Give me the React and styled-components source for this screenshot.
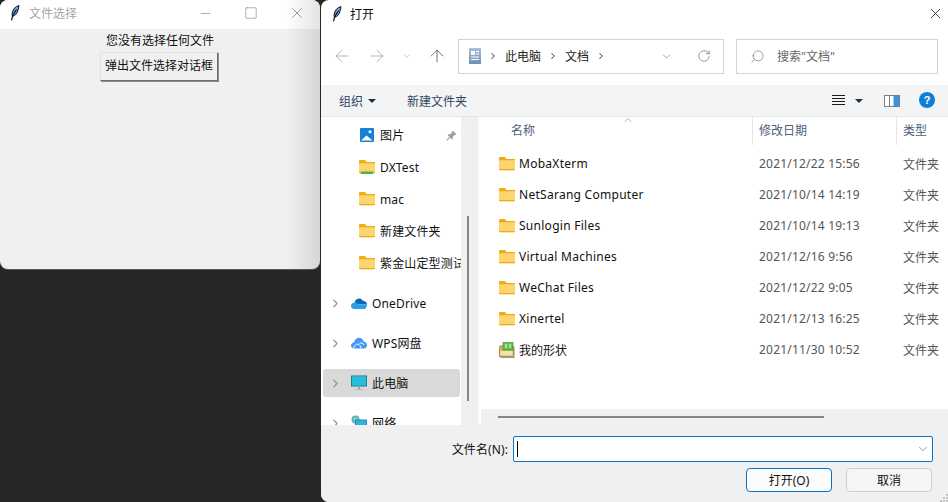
import React from 'react';
import styled, { createGlobalStyle } from 'styled-components';
import { ArrowLeft, ArrowRight, ArrowUp, ChevronDown, ChevronRight, RotateCw, Search, X, Minus, Square, ChevronUp } from 'lucide-react';

const sideTop = [
  { name: '图片', icon: 'picture', pin: true },
  { name: 'DXTest', icon: 'sync' },
  { name: 'mac', icon: 'folder' },
  { name: '新建文件夹', icon: 'folder' },
  { name: '紫金山定型测试', icon: 'folder' },
];

const sideTree = [
  { name: 'OneDrive', icon: 'onedrive' },
  { name: 'WPS网盘', icon: 'wps' },
  { name: '此电脑', icon: 'pc', active: true },
  { name: '网络', icon: 'network' },
];

const files = [
  { name: 'MobaXterm', date: '2021/12/22 15:56', type: '文件夹' },
  { name: 'NetSarang Computer', date: '2021/10/14 14:19', type: '文件夹' },
  { name: 'Sunlogin Files', date: '2021/10/14 19:13', type: '文件夹' },
  { name: 'Virtual Machines', date: '2021/12/16 9:56', type: '文件夹' },
  { name: 'WeChat Files', date: '2021/12/22 9:05', type: '文件夹' },
  { name: 'Xinertel', date: '2021/12/13 16:25', type: '文件夹' },
  { name: '我的形状', date: '2021/11/30 10:52', type: '文件夹', icon: 'shapes' },
];

const Feather = () => (
  <svg width="10" height="16" viewBox="0 0 10 16">
    <path d="M9 .6C5.500 1.400 2.800 4.200 2.200 8c-.2 1.400-.1 2.500.2 3.400 2.800-.6 4.700-3 5.500-5.800C8.400 3.900 8.800 2.200 9 .6z" fill="#6f9fe0" stroke="#0d1420" strokeWidth="1" />
    <path d="M6.500 4.500 2.600 11 1.500 15.400" fill="none" stroke="#0d1420" strokeWidth="1.200" />
  </svg>
);

const Folder = ({ sync }) => (
  <svg width="16" height="16" viewBox="0 0 16 16">
    <path d="M0 2.200C0 1.500.5 1 1.200 1h4.200c.4 0 .7.2 1 .5L7.600 3H16v2H0z" fill="#f0ac0e" />
    <path d="M0 4.300h15c.6 0 1 .4 1 1V13c0 .8-.5 1.300-1.200 1.300H1.200C.5 14.300 0 13.800 0 13z" fill="#fdd56f" />
    <path d="M0 13h16v.3c0 .6-.5 1-1.200 1H1.200C.5 14.300 0 13.900 0 13.300z" fill="#efac16" />
    {sync && <rect x="2" y="12.500" width="12" height="2.500" fill="#4cb848" />}
  </svg>
);

const PictureIcon = () => (
  <svg width="14" height="14" viewBox="0 0 14 14">
    <rect width="14" height="14" rx="1" fill="#1580d8" />
    <path d="M1 12.500 6.500 7.500 12.500 12.500z" fill="#fff" />
    <circle cx="10" cy="3.800" r="1.500" fill="#fff" />
  </svg>
);

const OneDriveIcon = () => (
  <svg width="16" height="11" viewBox="0 0 16 11">
    <path d="M3.600 4.500C4.200 2 6 .5 8 .5c1.700 0 3 .9 3.700 2.300 2.300 0 4 1.300 4.300 3.500H6z" fill="#0f64b8" />
    <path d="M3.500 11C1.500 11 0 9.700 0 7.900 0 6 1.600 4.500 3.700 4.500c1.400 0 2.500.6 3.300 1.800l9 0c.2 1.800-.9 4.700-2.800 4.700z" fill="#2b9fe8" />
  </svg>
);

const WpsIcon = () => (
  <svg width="16" height="12" viewBox="0 0 16 12">
    <path d="M3.500 11.500C1.500 11.500 0 10.200 0 8.400 0 6.700 1.300 5.500 3 5.400 3.600 2.600 5.700 .8 8 .8c2.200 0 4 1.500 4.600 3.800 2 .2 3.400 1.700 3.400 3.600 0 2-1.400 3.300-3.400 3.300z" fill="#3f9bf2" />
    <path d="M2.500 11.500C3.500 8 5 6.800 7 7.200c1.600.3 2.700 1.900 3 4.300" fill="none" stroke="#fff" strokeWidth="1" />
    <path d="M8.500 6.500C9.800 5.500 12 5.800 13 8" fill="none" stroke="#fff" strokeWidth="1" />
  </svg>
);

const PcIcon = () => (
  <svg width="16" height="16" viewBox="0 0 16 16">
    <rect y=".5" width="16" height="11" rx=".5" fill="#1f6f8b" />
    <rect x=".8" y="1.200" width="14.400" height="9.500" fill="#27bedc" />
    <rect x="7" y="11.500" width="2" height="2.500" fill="#9aa4aa" />
    <rect x="4" y="14" width="8" height="1" fill="#b4bcc0" />
  </svg>
);

const NetworkIcon = () => (
  <svg width="16" height="16" viewBox="0 0 16 16">
    <circle cx="4.500" cy="4.500" r="4" fill="#5ab0d8" />
    <path d="M2 3.500 5 1.800 6.500 4 4 7z" fill="#9ed27c" />
    <rect x="4" y="4.500" width="12" height="9" rx=".5" fill="#1f8fb2" />
    <rect x="5" y="5.500" width="10" height="7" fill="#31b5d4" />
  </svg>
);

const ShapesIcon = () => (
  <svg width="16" height="16" viewBox="0 0 16 16">
    <rect x="0" y="4" width="15" height="11" rx="1.500" fill="#d9b25f" stroke="#7a6a44" strokeWidth=".8" />
    <rect x="1.500" y="9" width="12" height="4.500" fill="#f2e3b0" />
    <rect x="4" y=".5" width="10" height="7.500" fill="#5cc04a" stroke="#3b8a2f" strokeWidth=".6" />
    <path d="M6 3h2.200M6 5h2.200M10 3h2.200M10 5h2.200" stroke="#fff" strokeWidth="1" />
    <rect x="2" y="15" width="14" height="1" fill="#9a9a9a" />
  </svg>
);

const DocsIcon = () => (
  <svg width="12" height="16" viewBox="0 0 12 16">
    <defs>
      <linearGradient id="docs" x1="0" y1="0" x2="0" y2="1">
        <stop offset="0" stopColor="#a9c0d9" />
        <stop offset="1" stopColor="#6e8fb5" />
      </linearGradient>
    </defs>
    <rect width="12" height="16" fill="url(#docs)" />
    <rect x="2" y="3" width="4" height="4" fill="#fff" />
    <path d="M7 3.500h3M7 6h3M2 9h8M2 11.500h8" stroke="#fff" strokeWidth="1" />
  </svg>
);

const PinIcon = () => (
  <svg width="11" height="11" viewBox="0 0 11 11">
    <path d="M6.800.5 10.500 4.200 9.500 5 8.800 4.700 6.800 6.700 6.800 8.800 6 9.500 1.500 5 2.200 4.200 4.300 4.200 6.300 2.200 6 1.500z" fill="#98a0a8" />
    <path d="M3.500 7.500.7 10.300" stroke="#98a0a8" strokeWidth="1.100" />
  </svg>
);

const PaneIcon = () => (
  <svg width="16" height="12" viewBox="0 0 16 12">
    <rect x=".5" y=".5" width="15" height="11" fill="#fff" stroke="#7e7e7e" />
    <rect x="5" y="1" width="1" height="10" fill="#7e7e7e" />
    <rect x="9.500" y="1" width="5.500" height="10" fill="#3b94e0" />
  </svg>
);

const ViewIcon = () => (
  <svg width="13" height="11" viewBox="0 0 13 11">
    <path d="M0 .5h13M0 3.500h13M0 6.500h13M0 9.500h13" stroke="#1a1a1a" strokeWidth="1" />
  </svg>
);

const GripIcon = () => (
  <svg width="8" height="8" viewBox="0 0 8 8">
    <path d="M6 0h2v2H6zM3 3h2v2H3zM6 3h2v2H6zM0 6h2v2H0zM3 6h2v2H3zM6 6h2v2H6z" fill="#c4c4c4" />
  </svg>
);

const iconFor = {
  picture: <PictureIcon />,
  sync: <Folder sync />,
  folder: <Folder />,
  onedrive: <OneDriveIcon />,
  wps: <WpsIcon />,
  pc: <PcIcon />,
  network: <NetworkIcon />,
  shapes: <ShapesIcon />,
};

export default function App() {
  return (
    <Desktop>
      <GlobalStyle />
      <TkWindow>
        <TkTitleBar>
          <Feather />
          <TkTitle>文件选择</TkTitle>
          <TkControls>
            <Minus size={15} strokeWidth={1} />
            <Square size={14} strokeWidth={1} />
            <X size={18} strokeWidth={1} />
          </TkControls>
        </TkTitleBar>
        <TkBody>
          <TkLabel>您没有选择任何文件</TkLabel>
          <TkButton>弹出文件选择对话框</TkButton>
        </TkBody>
      </TkWindow>

      <Dialog>
        <DialogTitleBar>
          <Feather />
          <DialogTitle>打开</DialogTitle>
          <CloseIcon><X size={17} strokeWidth={1.100} /></CloseIcon>
        </DialogTitleBar>

        <NavBar>
          <NavIcon $width={35} $faded><ArrowLeft size={20} strokeWidth={1} /></NavIcon>
          <NavIcon $width={35} $faded><ArrowRight size={20} strokeWidth={1} /></NavIcon>
          <NavIcon $width={25} $faded><ChevronDown size={10} strokeWidth={1.500} /></NavIcon>
          <NavIcon $width={31}><ArrowUp size={20} strokeWidth={1} /></NavIcon>
          <AddressBox>
            <DocsIcon />
            <Crumb><ChevronRight size={10} strokeWidth={2.500} />此电脑</Crumb>
            <Crumb><ChevronRight size={10} strokeWidth={2.500} />文档</Crumb>
            <ChevronRight size={10} strokeWidth={2.500} color="#555" />
            <AddressTools>
              <ChevronDown size={13} strokeWidth={1} color="#555" />
              <RotateCw size={14} strokeWidth={1} color="#555" />
            </AddressTools>
          </AddressBox>
          <SearchBox>
            <SearchGlyph><Search size={15} strokeWidth={1} color="#666" /></SearchGlyph>
            搜索"文档"
          </SearchBox>
        </NavBar>

        <CommandBar>
          <CommandItem>组织<Caret /></CommandItem>
          <CommandItem>新建文件夹</CommandItem>
          <CommandTools>
            <ViewIcon />
            <Caret />
            <PaneIcon />
            <HelpBadge>?</HelpBadge>
          </CommandTools>
        </CommandBar>

        <Body>
          <Sidebar>
            {sideTop.map(item => (
              <QuickRow key={item.name}>
                <RowIcon>{iconFor[item.icon]}</RowIcon>
                <RowName>{item.name}</RowName>
                {item.pin && <PinSlot><PinIcon /></PinSlot>}
              </QuickRow>
            ))}
            <TreeList>
              {sideTree.map(item => (
                <TreeRow key={item.name} $active={item.active}>
                  <ChevronRight size={13} strokeWidth={2.200} color="#939393" />
                  <RowIcon>{iconFor[item.icon]}</RowIcon>
                  <RowName>{item.name}</RowName>
                </TreeRow>
              ))}
            </TreeList>
          </Sidebar>
          <SideTrack><SideThumb /></SideTrack>
          <FilePane>
            <ListHeader>
              <SortArrow><ChevronUp size={12} strokeWidth={1} /></SortArrow>
              <HeaderCell $width={273} $pad={32}>名称</HeaderCell>
              <HeaderCell $width={144} $pad={6} $line>修改日期</HeaderCell>
              <HeaderCell $pad={6} $line>类型</HeaderCell>
            </ListHeader>
            <FileRows>
              {files.map(file => (
                <FileRow key={file.name}>
                  <FileName $latin={!file.icon}>
                    {iconFor[file.icon || 'folder']}
                    {file.name}
                  </FileName>
                  <FileMeta $width={144} $latin>{file.date}</FileMeta>
                  <FileMeta>{file.type}</FileMeta>
                </FileRow>
              ))}
            </FileRows>
            <HTrack><HThumb /></HTrack>
          </FilePane>
        </Body>

        <Footer>
          <NameRow>
            <NameLabel>文件名(N):</NameLabel>
            <NameInput>
              <Cursor />
              <ChevronDown size={14} strokeWidth={1} color="#555" />
            </NameInput>
          </NameRow>
          <ButtonRow>
            <DialogButton $primary>打开(O)</DialogButton>
            <DialogButton>取消</DialogButton>
          </ButtonRow>
          <Grip><GripIcon /></Grip>
        </Footer>
      </Dialog>
    </Desktop>
  );
}

const GlobalStyle = createGlobalStyle`
  html, body { margin: 0; padding: 0; background: #262626; }
  * { box-sizing: border-box; }
`;

const Desktop = styled.div`
  position: relative;
  width: 948px;
  height: 502px;
  overflow: hidden;
  background: #262626;
  font-family: "Noto Sans", "Noto Sans CJK SC", sans-serif;
  font-size: 12px;
  color: #111;
`;

const TkWindow = styled.div`
  position: absolute;
  left: 0;
  top: 0;
  width: 320px;
  height: 269px;
  border-radius: 8px;
  overflow: hidden;
  background: #f0f0f0;
  box-shadow: 0 1px 0 #555;
  display: flex;
  flex-direction: column;
  &::after {
    content: '';
    position: absolute;
    top: 0;
    right: 0;
    bottom: 0;
    width: 34px;
    background: linear-gradient(to right, rgba(0, 0, 0, 0), rgba(0, 0, 0, 0.11));
    pointer-events: none;
  }
`;

const TkTitleBar = styled.div`
  height: 29px;
  background: #fff;
  display: flex;
  align-items: center;
  padding: 0 0 3px 10px;
  flex-shrink: 0;
`;

const TkTitle = styled.span`
  margin-left: 9px;
  color: #a6a6a6;
`;

const TkControls = styled.div`
  margin-left: auto;
  width: 122px;
  padding-right: 14px;
  display: flex;
  justify-content: space-between;
  align-items: center;
  color: #7c7c7c;
`;

const TkBody = styled.div`
  display: flex;
  flex-direction: column;
  align-items: center;
  padding-top: 1px;
`;

const TkLabel = styled.div`
  height: 22px;
  line-height: 21px;
  color: #111;
`;

const TkButton = styled.div`
  width: 118px;
  height: 29px;
  margin-right: 2px;
  line-height: 26px;
  text-align: center;
  background: #f0f0f0;
  border: 1px solid;
  border-color: #e4e4e4 #6e6e6e #6e6e6e #e4e4e4;
  box-shadow: 1px 1px 0 #8a8a8a;
  color: #111;
`;

const Dialog = styled.div`
  position: absolute;
  left: 321px;
  top: 0;
  width: 627px;
  height: 502px;
  background: #fff;
  border-radius: 8px 0 0 8px;
  overflow: hidden;
  display: flex;
  flex-direction: column;
`;

const DialogTitleBar = styled.div`
  height: 27px;
  display: flex;
  align-items: center;
  padding-left: 11px;
  flex-shrink: 0;
`;

const DialogTitle = styled.span`
  margin-left: 8px;
`;

const CloseIcon = styled.span`
  margin-left: auto;
  margin-right: 4px;
  display: flex;
`;

const NavBar = styled.div`
  height: 58px;
  display: flex;
  align-items: center;
  flex-shrink: 0;
  padding-left: 11px;
`;

const NavIcon = styled.span`
  width: ${props => props.$width}px;
  display: flex;
  color: ${props => (props.$faded ? '#a8a8a8' : '#555')};
`;

const AddressBox = styled.div`
  width: 266px;
  height: 35px;
  padding: 0 12px 0 10px;
  border: 1px solid #d4d4d4;
  display: flex;
  align-items: center;
  gap: 7px;
`;

const Crumb = styled.span`
  display: inline-flex;
  align-items: center;
  gap: 7px;
  color: #222;
  svg { color: #555; }
`;

const AddressTools = styled.span`
  margin-left: auto;
  display: flex;
  align-items: center;
  gap: 24px;
`;

const SearchBox = styled.div`
  width: 202px;
  height: 35px;
  margin-left: 12px;
  border: 1px solid #d4d4d4;
  display: flex;
  align-items: center;
  color: #666;
`;

const SearchGlyph = styled.span`
  display: flex;
  margin: 0 12px 0 13px;
  transform: scaleX(-1);
`;

const CommandBar = styled.div`
  height: 32px;
  background: #f3f4f6;
  border-bottom: 1px solid #e6e6e6;
  display: flex;
  align-items: center;
  padding-left: 18px;
  flex-shrink: 0;
  gap: 31px;
`;

const CommandItem = styled.span`
  display: inline-flex;
  align-items: center;
  gap: 5px;
  color: #2f4560;
`;

const Caret = styled.span`
  width: 0;
  height: 0;
  border-left: 4px solid transparent;
  border-right: 4px solid transparent;
  border-top: 4px solid #1d2f4a;
`;

const CommandTools = styled.div`
  margin-left: auto;
  margin-right: 13px;
  display: flex;
  align-items: center;
  gap: 10px;
  svg:nth-of-type(2) { margin-left: 11px; margin-right: 9px; }
`;

const HelpBadge = styled.span`
  width: 16px;
  height: 16px;
  margin-top: -1px;
  border-radius: 50%;
  background: #0f7fd6;
  color: #fff;
  font-family: "Liberation Sans", sans-serif;
  font-size: 11px;
  font-weight: 700;
  line-height: 16px;
  text-align: center;
`;

const Body = styled.div`
  flex: 1;
  min-height: 0;
  display: flex;
`;

const Sidebar = styled.div`
  width: 140px;
  flex-shrink: 0;
  padding-top: 2px;
  overflow: hidden;
`;

const QuickRow = styled.div`
  height: 32px;
  display: flex;
  align-items: center;
  padding-left: 38px;
  white-space: nowrap;
`;

const RowIcon = styled.span`
  width: 16px;
  height: 16px;
  display: flex;
  align-items: center;
  justify-content: center;
  flex-shrink: 0;
`;

const RowName = styled.span`
  margin-left: 5px;
  letter-spacing: 0.15px;
  overflow: hidden;
`;

const PinSlot = styled.span`
  margin-left: auto;
  margin-right: 4px;
  display: flex;
`;

const TreeList = styled.div`
  margin-top: 10px;
  display: flex;
  flex-direction: column;
  gap: 12px;
  padding-left: 2px;
`;

const TreeRow = styled.div`
  height: 28px;
  width: 137px;
  display: flex;
  align-items: center;
  padding-left: 6px;
  gap: 9px;
  border-radius: 3px;
  background: ${props => (props.$active ? '#d9d9d9' : 'transparent')};
  flex-shrink: 0;
  ${RowName} { margin-left: -4px; }
`;

const SideTrack = styled.div`
  width: 17px;
  flex-shrink: 0;
  background: #f0f0f0;
  padding: 99px 0 0 6px;
  border-right: 1px solid #f5f5f5;
`;

const SideThumb = styled.div`
  width: 2px;
  height: 185px;
  background: #858585;
`;

const FilePane = styled.div`
  flex: 1;
  min-width: 0;
  display: flex;
  flex-direction: column;
  border-left: 1px solid #f3f3f3;
`;

const ListHeader = styled.div`
  position: relative;
  height: 28px;
  display: flex;
  flex-shrink: 0;
`;

const SortArrow = styled.span`
  position: absolute;
  left: 143px;
  top: -3px;
  display: flex;
  color: #666;
`;

const HeaderCell = styled.div`
  width: ${props => (props.$width ? `${props.$width}px` : 'auto')};
  flex: ${props => (props.$width ? 'none' : '1')};
  padding-left: ${props => props.$pad}px;
  line-height: 27px;
  color: #4c607a;
  border-left: ${props => (props.$line ? '1px solid #e5e5e5' : 'none')};
`;

const FileRows = styled.div`
  flex: 1;
  padding-top: 3px;
`;

const FileRow = styled.div`
  height: 31px;
  display: flex;
  align-items: center;
  white-space: nowrap;
`;

const FileName = styled.div`
  width: 280px;
  padding-left: 20px;
  display: flex;
  align-items: center;
  gap: 4px;
  letter-spacing: ${props => (props.$latin ? '0.27px' : '0')};
  color: #111;
`;

const FileMeta = styled.div`
  width: ${props => (props.$width ? `${props.$width}px` : 'auto')};
  letter-spacing: ${props => (props.$latin ? '0.2px' : '0')};
  color: #555;
`;

const HTrack = styled.div`
  height: 16px;
  margin-left: 2px;
  background: #f0f0f0;
  padding: 7px 0 0 17px;
  flex-shrink: 0;
`;

const HThumb = styled.div`
  width: 326px;
  height: 2px;
  background: #858585;
`;

const Footer = styled.div`
  position: relative;
  height: 77px;
  background: #f0f0f0;
  flex-shrink: 0;
  padding-top: 11px;
`;

const NameRow = styled.div`
  display: flex;
  align-items: center;
  justify-content: flex-end;
  padding-right: 15px;
  gap: 5px;
`;

const NameLabel = styled.label`
  letter-spacing: 0.1px;
  color: #111;
`;

const NameInput = styled.div`
  width: 420px;
  height: 26px;
  background: #fff;
  border: 1px solid #0a74c8;
  border-radius: 2px;
  display: flex;
  align-items: center;
  justify-content: space-between;
  padding: 0 2px 0 3px;
`;

const Cursor = styled.span`
  width: 1px;
  height: 16px;
  background: #000;
`;

const ButtonRow = styled.div`
  display: flex;
  justify-content: flex-end;
  gap: 14px;
  padding: 6px 16px 0 0;
`;

const DialogButton = styled.div`
  width: 86px;
  height: 24px;
  line-height: 23px;
  text-align: center;
  border-radius: 4px;
  background: ${props => (props.$primary ? '#fbfbfb' : '#f5f5f5')};
  border: 1px solid ${props => (props.$primary ? '#0a74c8' : '#cfcfcf')};
  color: #111;
`;

const Grip = styled.span`
  position: absolute;
  right: 0;
  bottom: 0;
  display: flex;
`;
